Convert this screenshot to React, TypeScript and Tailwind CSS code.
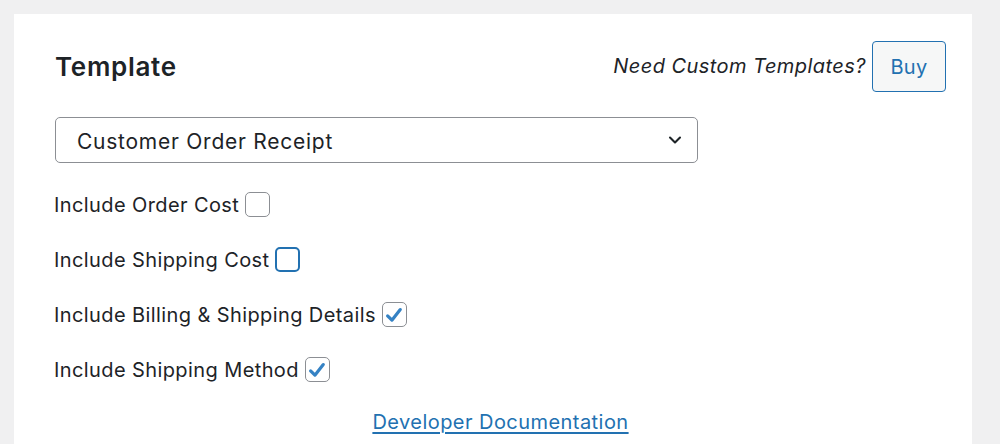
import { ChevronDown } from 'lucide-react';

const options = [
  { label: 'Include Order Cost', checked: false, focused: false },
  { label: 'Include Shipping Cost', checked: false, focused: true },
  { label: 'Include Billing & Shipping Details', checked: true, focused: false },
  { label: 'Include Shipping Method', checked: true, focused: false },
];

function Check({ checked, focused }: { checked: boolean; focused: boolean }) {
  return (
    <span
      className={
        focused
          ? 'ml-[6px] flex h-[25px] w-[25px] items-center justify-center rounded-[5px] border-2 border-[#2271b1] bg-white'
          : 'ml-[6px] flex h-[25px] w-[25px] items-center justify-center rounded-[5px] border border-[#8c8f94] bg-white'
      }
    >
      {checked ? (
        <svg viewBox="0 0 20 20" className="h-[22px] w-[22px]">
          <path d="M4.2 10.8l3.9 3.9 7.6-9.6" fill="none" stroke="#3582c4" strokeWidth="2.9" strokeLinecap="round" strokeLinejoin="round" />
        </svg>
      ) : null}
    </span>
  );
}

export default function App() {
  return (
    <div className="min-h-[444px] bg-[#f0f0f1] pl-[14px] pr-[28px] pt-[14px] font-['Inter','Liberation_Sans',sans-serif] text-[#1d2327]">
      <div className="h-[440px] bg-white pl-[41px] pr-[26px] pt-[27px]">
        <div className="flex items-center justify-between">
          <h2 className="text-[26px] font-semibold tracking-[0.7px]">Template</h2>
          <div className="flex items-start">
            <span className="mt-[10px] text-[20px] italic tracking-[0.45px]">Need Custom Templates?</span>
            <button className="ml-[6px] h-[51px] w-[74px] rounded-[4px] border border-[#2271b1] bg-[#f6f7f7] text-[20px] tracking-[0.3px] text-[#2271b1]">
              Buy
            </button>
          </div>
        </div>
        <div className="mt-[25px] flex h-[46px] w-[643px] items-center justify-between rounded-[5px] border border-[#8c8f94] pb-[-2px] pl-[21px] pr-[12px] pt-[3px] text-[21px] tracking-[0.75px]">
          <span>Customer Order Receipt</span>
          <ChevronDown className="-mt-[3px] h-[20px] w-[20px]" strokeWidth={2.5} />
        </div>
        <div className="mt-[29px] flex flex-col gap-[30px]">
          {options.map((o) => (
            <label key={o.label} className="-ml-[1px] flex h-[25px] items-center text-[20px] tracking-[0.4px]">
              {o.label}
              <Check checked={o.checked} focused={o.focused} />
            </label>
          ))}
        </div>
        <div className="mt-[25px] text-center">
          <a href="#" className="text-[20px] tracking-[0.45px] text-[#2271b1] underline underline-offset-[3px]">
            Developer Documentation
          </a>
        </div>
      </div>
    </div>
  );
}
